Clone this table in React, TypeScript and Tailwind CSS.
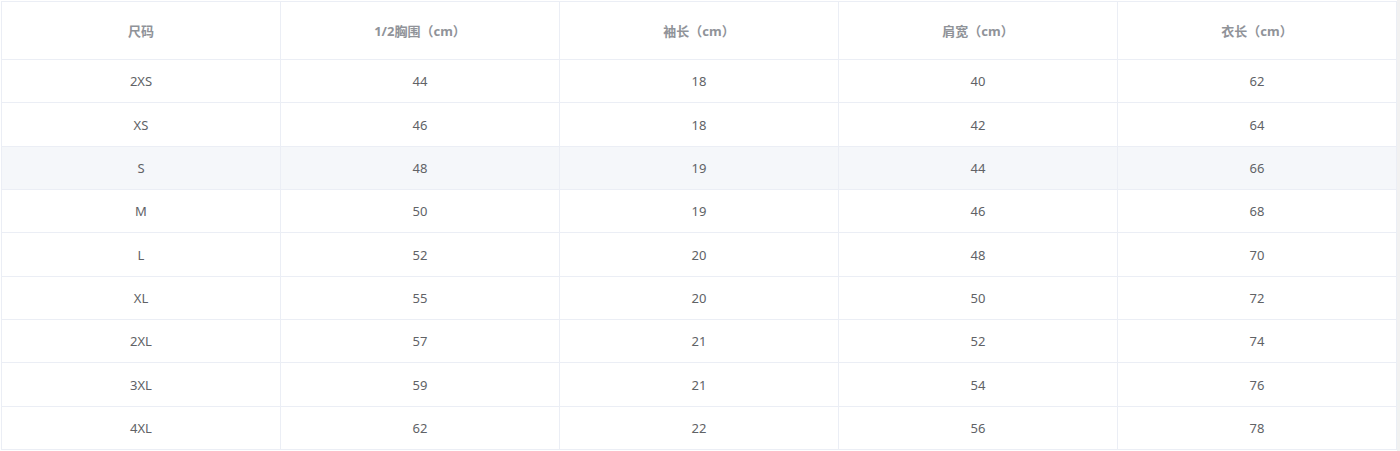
import React from "react";

const headers = ["尺码", "1/2胸围（cm）", "袖长（cm）", "肩宽（cm）", "衣长（cm）"];
const rows: string[][] = [
  ["2XS", "44", "18", "40", "62"],
  ["XS", "46", "18", "42", "64"],
  ["S", "48", "19", "44", "66"],
  ["M", "50", "19", "46", "68"],
  ["L", "52", "20", "48", "70"],
  ["XL", "55", "20", "50", "72"],
  ["2XL", "57", "21", "52", "74"],
  ["3XL", "59", "21", "54", "76"],
  ["4XL", "62", "22", "56", "78"],
];
const heights = ["h-[43px]", "h-[44px]", "h-[43px]", "h-[43px]", "h-[44px]", "h-[43px]", "h-[43px]", "h-[44px]", "h-[43px]"];

export default function App() {
  return (
    <div
      className="w-[1400px] h-[451px] bg-white flex"
      style={{ fontFamily: '"Noto Sans", "Noto Sans CJK SC", sans-serif' }}
    >
      <div className="pt-px pl-px">
        <div className="w-[1396px] border-t border-l border-[#ebeef5]">
          <div className="flex h-[58px]">
            {headers.map((h, i) => (
              <div
                key={i}
                className="w-[279px] border-r border-b border-[#ebeef5] flex items-center justify-center pt-[3px] text-[13px] font-bold text-[#909399]"
              >
                {h}
              </div>
            ))}
          </div>
          {rows.map((r, ri) => (
            <div key={ri} className={`flex ${heights[ri]} ${ri === 2 ? "bg-[#f5f7fa]" : ""}`}>
              {r.map((c, ci) => (
                <div
                  key={ci}
                  className="w-[279px] border-r border-b border-[#ebeef5] flex items-center justify-center pt-[2px] text-[13px] text-[#606266]"
                >
                  {c}
                </div>
              ))}
            </div>
          ))}
        </div>
      </div>
      <div className="w-[3px] h-full bg-[#f1f1f1]" />
    </div>
  );
}
